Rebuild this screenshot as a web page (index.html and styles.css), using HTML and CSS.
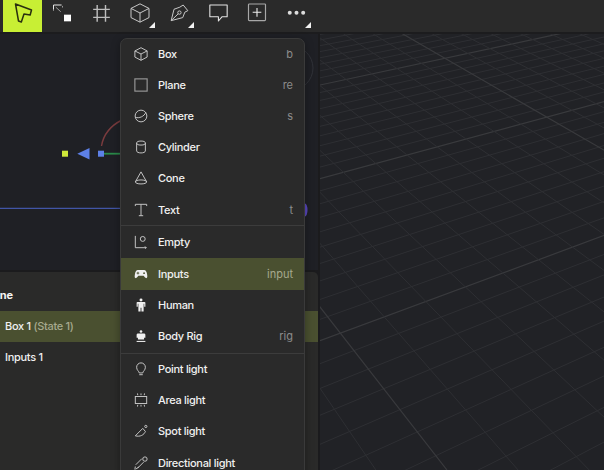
FILE: index.html
```html
<!DOCTYPE html>
<html lang="en">
<head>
<meta charset="utf-8">
<title>Scene editor</title>
<link rel="stylesheet" href="styles.css">
</head>
<body>
<div class="app">
  <header class="toolbar">
    <button class="tool tool-active"><svg class="ti" viewBox="0 0 24 24"><path d="M3 1.200 22.200 8.400 20.600 14.400 13.200 13.200 10 22.800 6.600 21.600Z" fill="none" stroke="#2a3010" stroke-width="1.800" stroke-linejoin="round"/></svg></button>
    <button class="tool"><svg class="ti" viewBox="0 0 24 24"><path d="M1.800 8V2.400H11.500" fill="none" stroke="#e6e6e6" stroke-width="1.200"/><path d="M1.800 8.500v1M12.600 3.500v2" fill="none" stroke="#aaa" stroke-width="1"/><path d="M4.500 5l6 5.500" stroke="#aaa" stroke-width="1.100"/><rect x="14.400" y="14" width="8.400" height="8" fill="#fff"/></svg></button>
    <button class="tool"><svg class="ti" viewBox="0 0 24 24"><path d="M7.400 2.400v20M17.400 2.400v20M2.600 7.600h20M2.600 17.200h20" fill="none" stroke="#bdbdbd" stroke-width="1.700"/></svg></button>
    <button class="tool tool-more"><svg class="ti" viewBox="0 0 24 24"><path d="M12 1 22.800 6.500V17.500L12 23 1.200 17.500V6.500ZM1.200 6.500 12 12l10.800-5.500M12 12v11" fill="none" stroke="#c8c8c8" stroke-width="1.200" stroke-linejoin="round"/></svg></button>
    <button class="tool tool-more"><svg class="ti" viewBox="0 0 24 24"><path d="M17 2.400 22.600 9.200 19 11 16.500 17.500 2.600 21.200 6 7.500 13 5ZM2.600 21.200 11 13" fill="none" stroke="#c8c8c8" stroke-width="1.200" stroke-linejoin="round"/><circle cx="12.500" cy="11.500" r="2" fill="none" stroke="#c8c8c8" stroke-width="1.200"/></svg></button>
    <button class="tool"><svg class="ti" viewBox="0 0 24 24"><path d="M2.200 2.400H23V16.400H17L12.500 21.600V16.400H2.200Z" fill="none" stroke="#e4e4e4" stroke-width="1.300" stroke-linejoin="round"/></svg></button>
    <button class="tool"><svg class="ti" viewBox="0 0 24 24"><rect x="1.800" y="1.200" width="20.400" height="20" rx="1" fill="none" stroke="#a8a8a8" stroke-width="1.400"/><path d="M12 6v10.400M6.800 11.200h10.400" stroke="#eee" stroke-width="1.300"/></svg></button>
    <button class="tool tool-more"><svg class="ti" viewBox="0 0 24 24"><circle cx="4.500" cy="11.600" r="2.400" fill="#ddd"/><circle cx="12.600" cy="11.600" r="2.400" fill="#ddd"/><circle cx="20.600" cy="11.600" r="2.400" fill="#ddd"/></svg></button>
  </header>

  <main class="workspace">
    <section class="side">
      <div class="graph">
        <svg class="gizmo" viewBox="0 0 318 236">
          <circle cx="291" cy="34" r="22" fill="none" stroke="#303238" stroke-width="1"/>
          <path d="M101.500 112 C103.500 100 110 92 122 86" fill="none" stroke="#7a3b3e" stroke-width="1.400"/>
          <path d="M104 119.700 H122" stroke="#2a8a4a" stroke-width="1.800"/>
          <rect x="62" y="116.700" width="6" height="6" fill="#cfe83a"/>
          <path d="M77.300 119.700 L89.500 114 V125.400 Z" fill="#5d80e8"/>
          <rect x="98" y="116.700" width="6" height="6" fill="#5d80e8"/>
          <path d="M0 174.300 H305" stroke="#4a63c8" stroke-width="1"/>
          <ellipse cx="305" cy="176" rx="2.500" ry="6.500" fill="#5a48c0"/>
        </svg>
      </div>
      <div class="list">
        <div class="list-head">Scene</div>
        <div class="list-row list-row-on">Box 1 <span class="list-state">(State 1)</span></div>
        <div class="list-row">Inputs 1</div>
      </div>
    </section>
    <section class="viewport"><svg id="grid" class="grid" viewBox="320 34 284 436"></svg></section>
  </main>

  <nav class="menu">
    <div class="mi"><svg class="mic" viewBox="0 0 16 16"><path d="M8 .800 15 4.500V11.500L8 15.200 1 11.500V4.500ZM1 4.500 8 8l7-3.500M8 8v7.200" class="ln"/></svg><span class="ml">Box</span><span class="mk">b</span></div>
    <div class="mi"><svg class="mic" viewBox="0 0 16 16"><rect x="1" y="1" width="14" height="14" class="ln ln-dim"/></svg><span class="ml">Plane</span><span class="mk">re</span></div>
    <div class="mi"><svg class="mic" viewBox="0 0 16 16"><circle cx="8" cy="8" r="6.700" class="ln"/><path d="M1.500 9.500C6 11 11.500 8.500 13.500 4" class="ln"/></svg><span class="ml">Sphere</span><span class="mk">s</span></div>
    <div class="mi"><svg class="mic" viewBox="0 0 16 16"><ellipse cx="8" cy="3.500" rx="5" ry="2.300" class="ln"/><path d="M3 3.500v9c0 1.300 2.200 2.300 5 2.300s5-1 5-2.300v-9" class="ln"/></svg><span class="ml">Cylinder</span><span class="mk"></span></div>
    <div class="mi"><svg class="mic" viewBox="0 0 16 16"><path d="M8 1 1.500 12.500M8 1l6.500 11.500" class="ln"/><ellipse cx="8" cy="12.500" rx="6.500" ry="2.300" class="ln"/></svg><span class="ml">Cone</span><span class="mk"></span></div>
    <div class="mi mi-last"><svg class="mic" viewBox="0 0 16 16"><path d="M1.500 3.500V1.500h13v2M8 1.500v13M5.500 14.500h5" class="ln"/></svg><span class="ml">Text</span><span class="mk">t</span></div>
    <div class="mi mi-sep"><svg class="mic" viewBox="0 0 16 16"><path d="M1.500 1v13.500h12.500M12.500 13l1.500 1.500-1.500 1" class="ln"/><circle cx="10" cy="4.500" r="2.800" class="ln"/></svg><span class="ml">Empty</span><span class="mk"></span></div>
    <div class="mi mi-on"><svg class="mic" viewBox="0 0 16 16"><path d="M4.500 3.500h7c2 0 3 2 3.500 5 .4 2.500.3 4-.8 4.200-1.300.2-2.200-1.700-3.200-2.700H5c-1 1-1.900 2.900-3.200 2.700C.7 12.500.6 11 1 8.500c.5-3 1.500-5 3.500-5Z" fill="#f0f0f0"/><path d="M4.500 5.500v3M3 7h3" stroke="#4a5030"/><circle cx="11.500" cy="7" r="1" fill="#4a5030"/></svg><span class="ml">Inputs</span><span class="mk">input</span></div>
    <div class="mi"><svg class="mic" viewBox="0 0 16 16"><circle cx="8" cy="2.200" r="1.700" fill="#f0f0f0"/><path d="M4 4.500h8c.7 0 1 .4 1 1v4.500h-1.300V6.500H11V15.500H8.500V11h-1v4.500H5V6.500h-.7V10H3V5.500c0-.6.300-1 1-1Z" fill="#f0f0f0"/></svg><span class="ml">Human</span><span class="mk"></span></div>
    <div class="mi mi-last"><svg class="mic" viewBox="0 0 16 16"><circle cx="8" cy="2.800" r="1.500" fill="#f0f0f0"/><path d="M4.500 5.200h7c.8 0 1.500.7 1.500 1.500V10h-1.500v2h-7v-2H3V6.700c0-.8.700-1.500 1.500-1.500Z" fill="#f0f0f0"/><path d="M3 14.200h10" stroke="#f0f0f0" stroke-width="1.200"/></svg><span class="ml">Body Rig</span><span class="mk">rig</span></div>
    <div class="mi mi-sep mi-sep-b"><svg class="mic" viewBox="0 0 16 16"><path d="M6 12.500C5.800 10.500 3 9.500 3 6a5 5 0 0 1 10 0c0 3.500-2.800 4.500-3 6.500ZM6 14.500h4" class="ln"/></svg><span class="ml">Point light</span><span class="mk"></span></div>
    <div class="mi"><svg class="mic" viewBox="0 0 16 16"><rect x="1.500" y="4" width="13" height="8" class="ln"/><path d="M4 .500l.3 2M8 .500v2M12 .500l-.3 2M4 15.500l.3-2M8 15.500v-2M12 15.500l-.3-2" class="ln"/></svg><span class="ml">Area light</span><span class="mk"></span></div>
    <div class="mi"><svg class="mic" viewBox="0 0 16 16"><path d="M1.500 13.500 10 5l3 3.500c-1.500 4-6 6.500-11.500 5Z" class="ln"/><circle cx="13.500" cy="2.800" r="1.300" class="ln"/></svg><span class="ml">Spot light</span><span class="mk"></span></div>
    <div class="mi"><svg class="mic" viewBox="0 0 16 16"><circle cx="12.500" cy="3.500" r="2.500" class="ln"/><path d="M9 3 2 10M11 7l-7 7M5.500 12.500 2 15M1.500 12l-.5 3.500" class="ln"/></svg><span class="ml">Directional light</span><span class="mk"></span></div>
  </nav>
</div>
<script src="grid.js"></script>
</body>
</html>
```
FILE: styles.css
```css
* { box-sizing: border-box; }
html, body { margin: 0; height: 100%; }
body { background: #212226; font-family: "Inter", "Liberation Sans", sans-serif; color: #f0f0f0; overflow: hidden; }
.app { position: relative; width: 604px; height: 470px; overflow: hidden; display: flex; flex-direction: column; }
.toolbar { height: 34px; flex: none; display: flex; padding-left: 3px; background: #2a2a2a; border-bottom: 2px solid #1c1c1e; }
.tool { position: relative; width: 39px; height: 32px; padding: 0 0 6px; border: 0; background: transparent; display: flex; align-items: center; justify-content: center; }
.tool-active { background: #c8ef34; }
.tool-more::after { content: ""; position: absolute; right: 4px; bottom: 4px; border-style: solid; border-width: 0 0 6px 6px; border-color: transparent transparent #f2f2f2 transparent; }
.ti { width: 20px; height: 20px; display: block; }
.workspace { flex: 1; min-height: 0; display: flex; background: #1b1b1d; }
.side { width: 318px; flex: none; display: flex; flex-direction: column; gap: 2px; }
.graph { height: 236px; flex: none; background: #1f2025; }
.gizmo { display: block; width: 318px; height: 236px; }
.list { flex: 1; background: #2a2a29; border-top-right-radius: 5px; padding-top: 10px; font-size: 11px; font-weight: 500; letter-spacing: -.3px; }
.list-head { height: 29px; line-height: 26px; margin-left: -20.500px; font-weight: 700; letter-spacing: 0; color: #f4f4f4; }
.list-row { height: 31px; line-height: 31px; padding-left: 5px; }
.list-row-on { background: #4a5030; }
.list-state { color: #a6a98e; }
.viewport { flex: 1; min-width: 0; margin-left: 2px; background: #212226; }
.grid { display: block; width: 284px; height: 436px; }
.menu { position: absolute; left: 120px; top: 38px; width: 185px; background: #2a2a2a; border: 1px solid #3a3a3a; border-radius: 7px; font-size: 11px; box-shadow: 0 2px 8px rgba(0,0,0,.35); }
.mi { height: 31.2px; display: flex; align-items: center; padding: 0 11px 0 13px; }
.mi:first-child { height: 30.2px; }
.mi-sep { height: 33.300px; border-top: 1px solid #3c3c3c; }
.mi-sep-b { height: 31.800px; margin-top: .9px; }
.mi-on { background: #4a5030; }
.mic { width: 14px; height: 14px; flex: none; margin-right: 10px; }
.ln { fill: none; stroke: #c8c8c8; stroke-width: 1.100; }
.ln-dim { stroke: #9a9a9a; stroke-width: 1.300; }
.ml { flex: 1; color: #f0f0f0; font-weight: 500; letter-spacing: -.3px; }
.mk { color: #8c8c8c; }
.mi-on .mk { color: #a6a98e; }
```
FILE: grid.js
```js
var svg = document.getElementById('grid');
var out = '';
function line(x1, y1, x2, y2, major) {
  out += '<line x1="' + x1 + '" y1="' + y1 + '" x2="' + x2 + '" y2="' + y2 + '" stroke="' + (major ? '#393a3d' : '#2e2f33') + '" stroke-width="' + (major ? 1.2 : 1) + '"/>';
}
// Family running up to the right, vanishing at (1955,-265)
for (var k = -50; k < 47; k++) {
  var u = 0.002857 - 0.0000603 * k;
  var y = -265 + 1 / u;
  line(320, y, 1955, -265, k % 10 === 0);
}
// Family running down to the right, vanishing at (-134,-276)
for (var n = -30; n < 40; n++) {
  var x = 447 + 71.1 * n;
  line(-134, -276, x, 470, n % 10 === 0);
}
svg.innerHTML = out;
```
